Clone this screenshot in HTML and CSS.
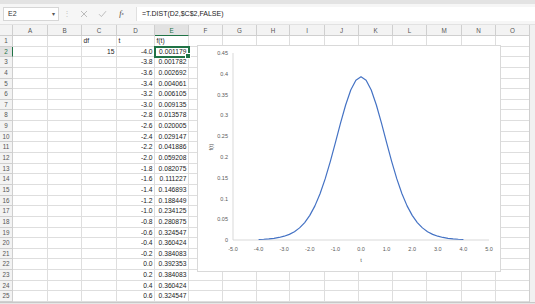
FILE: index.html
```html
<!DOCTYPE html>
<html lang="en">

<head>
  <meta charset="UTF-8">
  <title>T.DIST</title>
  <link rel="stylesheet" href="styles.css">
</head>

<body>
  <div class="app">
    <div class="topStrip"></div>
    <div class="formulaBar">
      <div class="nameBox">E2<span class="caret">&#9662;</span></div>
      <div class="dots">&#8942;</div>
      <div class="fbtn">
        <svg width="8" height="8" viewBox="0 0 8 8"><path d="M1 1L7 7M7 1L1 7" stroke="#b5b5b5" stroke-width="0.9" /></svg>
      </div>
      <div class="fbtn">
        <svg width="9" height="8" viewBox="0 0 9 8"><path d="M1 4.2L3.4 6.6L8 1.2" stroke="#b5b5b5" stroke-width="0.9" fill="none" /></svg>
      </div>
      <div class="fbtn fx"><i>f</i><sub>x</sub></div>
      <div class="formulaInput">=T.DIST(D2,$C$2,FALSE)</div>
    </div>

    <div class="sheet">
      <div class="corner"></div>
      <div class="ch">A</div><div class="ch">B</div><div class="ch">C</div><div class="ch">D</div>
      <div class="ch on">E</div><div class="ch">F</div><div class="ch">G</div><div class="ch">H</div>
      <div class="ch">I</div><div class="ch">J</div><div class="ch">K</div><div class="ch">L</div>
      <div class="ch">M</div><div class="ch">N</div><div class="ch">O</div><div class="edge"></div>

      <div class="rh">1</div><div></div><div></div><div class="l">df</div><div class="l">t</div><div class="l">f(t)</div><div></div><div></div><div></div><div></div><div></div><div></div><div></div><div></div><div></div><div></div><div class="edge"></div>
      <div class="rh on">2</div><div></div><div></div><div class="r">15</div><div class="r">-4.0</div><div class="r sel">0.001179</div><div></div><div></div><div></div><div></div><div></div><div></div><div></div><div></div><div></div><div></div><div class="edge"></div>
      <div class="rh">3</div><div></div><div></div><div></div><div class="r">-3.8</div><div class="r">0.001782</div><div></div><div></div><div></div><div></div><div></div><div></div><div></div><div></div><div></div><div></div><div class="edge"></div>
      <div class="rh">4</div><div></div><div></div><div></div><div class="r">-3.6</div><div class="r">0.002692</div><div></div><div></div><div></div><div></div><div></div><div></div><div></div><div></div><div></div><div></div><div class="edge"></div>
      <div class="rh">5</div><div></div><div></div><div></div><div class="r">-3.4</div><div class="r">0.004061</div><div></div><div></div><div></div><div></div><div></div><div></div><div></div><div></div><div></div><div></div><div class="edge"></div>
      <div class="rh">6</div><div></div><div></div><div></div><div class="r">-3.2</div><div class="r">0.006105</div><div></div><div></div><div></div><div></div><div></div><div></div><div></div><div></div><div></div><div></div><div class="edge"></div>
      <div class="rh">7</div><div></div><div></div><div></div><div class="r">-3.0</div><div class="r">0.009135</div><div></div><div></div><div></div><div></div><div></div><div></div><div></div><div></div><div></div><div></div><div class="edge"></div>
      <div class="rh">8</div><div></div><div></div><div></div><div class="r">-2.8</div><div class="r">0.013578</div><div></div><div></div><div></div><div></div><div></div><div></div><div></div><div></div><div></div><div></div><div class="edge"></div>
      <div class="rh">9</div><div></div><div></div><div></div><div class="r">-2.6</div><div class="r">0.020005</div><div></div><div></div><div></div><div></div><div></div><div></div><div></div><div></div><div></div><div></div><div class="edge"></div>
      <div class="rh">10</div><div></div><div></div><div></div><div class="r">-2.4</div><div class="r">0.029147</div><div></div><div></div><div></div><div></div><div></div><div></div><div></div><div></div><div></div><div></div><div class="edge"></div>
      <div class="rh">11</div><div></div><div></div><div></div><div class="r">-2.2</div><div class="r">0.041886</div><div></div><div></div><div></div><div></div><div></div><div></div><div></div><div></div><div></div><div></div><div class="edge"></div>
      <div class="rh">12</div><div></div><div></div><div></div><div class="r">-2.0</div><div class="r">0.059208</div><div></div><div></div><div></div><div></div><div></div><div></div><div></div><div></div><div></div><div></div><div class="edge"></div>
      <div class="rh">13</div><div></div><div></div><div></div><div class="r">-1.8</div><div class="r">0.082075</div><div></div><div></div><div></div><div></div><div></div><div></div><div></div><div></div><div></div><div></div><div class="edge"></div>
      <div class="rh">14</div><div></div><div></div><div></div><div class="r">-1.6</div><div class="r">0.111227</div><div></div><div></div><div></div><div></div><div></div><div></div><div></div><div></div><div></div><div></div><div class="edge"></div>
      <div class="rh">15</div><div></div><div></div><div></div><div class="r">-1.4</div><div class="r">0.146893</div><div></div><div></div><div></div><div></div><div></div><div></div><div></div><div></div><div></div><div></div><div class="edge"></div>
      <div class="rh">16</div><div></div><div></div><div></div><div class="r">-1.2</div><div class="r">0.188449</div><div></div><div></div><div></div><div></div><div></div><div></div><div></div><div></div><div></div><div></div><div class="edge"></div>
      <div class="rh">17</div><div></div><div></div><div></div><div class="r">-1.0</div><div class="r">0.234125</div><div></div><div></div><div></div><div></div><div></div><div></div><div></div><div></div><div></div><div></div><div class="edge"></div>
      <div class="rh">18</div><div></div><div></div><div></div><div class="r">-0.8</div><div class="r">0.280875</div><div></div><div></div><div></div><div></div><div></div><div></div><div></div><div></div><div></div><div></div><div class="edge"></div>
      <div class="rh">19</div><div></div><div></div><div></div><div class="r">-0.6</div><div class="r">0.324547</div><div></div><div></div><div></div><div></div><div></div><div></div><div></div><div></div><div></div><div></div><div class="edge"></div>
      <div class="rh">20</div><div></div><div></div><div></div><div class="r">-0.4</div><div class="r">0.360424</div><div></div><div></div><div></div><div></div><div></div><div></div><div></div><div></div><div></div><div></div><div class="edge"></div>
      <div class="rh">21</div><div></div><div></div><div></div><div class="r">-0.2</div><div class="r">0.384083</div><div></div><div></div><div></div><div></div><div></div><div></div><div></div><div></div><div></div><div></div><div class="edge"></div>
      <div class="rh">22</div><div></div><div></div><div></div><div class="r">0.0</div><div class="r">0.392353</div><div></div><div></div><div></div><div></div><div></div><div></div><div></div><div></div><div></div><div></div><div class="edge"></div>
      <div class="rh">23</div><div></div><div></div><div></div><div class="r">0.2</div><div class="r">0.384083</div><div></div><div></div><div></div><div></div><div></div><div></div><div></div><div></div><div></div><div></div><div class="edge"></div>
      <div class="rh">24</div><div></div><div></div><div></div><div class="r">0.4</div><div class="r">0.360424</div><div></div><div></div><div></div><div></div><div></div><div></div><div></div><div></div><div></div><div></div><div class="edge"></div>
      <div class="rh">25</div><div></div><div></div><div></div><div class="r">0.6</div><div class="r">0.324547</div><div></div><div></div><div></div><div></div><div></div><div></div><div></div><div></div><div></div><div></div><div class="edge"></div>
    </div>
    <div class="tabBar"></div>

    <!-- chart floats over the sheet, coords in page px -->
    <div class="chart">
      <svg width="304" height="227" viewBox="197 45 304 227">
        <g class="axis">
          <line x1="233" y1="53" x2="233" y2="240" />
          <line x1="233" y1="240" x2="489" y2="240" />
        </g>
        <g class="ylab">
          <text x="228" y="55">0.45</text>
          <text x="228" y="76">0.4</text>
          <text x="228" y="97">0.35</text>
          <text x="228" y="117">0.3</text>
          <text x="228" y="138">0.25</text>
          <text x="228" y="159">0.2</text>
          <text x="228" y="180">0.15</text>
          <text x="228" y="201">0.1</text>
          <text x="228" y="221">0.05</text>
          <text x="228" y="242">0</text>
        </g>
        <g class="xlab">
          <text x="233" y="251">-5.0</text>
          <text x="258.6" y="251">-4.0</text>
          <text x="284.2" y="251">-3.0</text>
          <text x="309.8" y="251">-2.0</text>
          <text x="335.4" y="251">-1.0</text>
          <text x="361" y="251">0.0</text>
          <text x="386.6" y="251">1.0</text>
          <text x="412.2" y="251">2.0</text>
          <text x="437.8" y="251">3.0</text>
          <text x="463.4" y="251">4.0</text>
          <text x="489" y="251">5.0</text>
        </g>
        <text class="atitle" x="361" y="261.5">t</text>
        <text class="atitle" transform="translate(213 147) rotate(-90)">f(t)</text>
        <polyline class="curve" points="258.6,239.51 263.72,239.26 268.84,238.88 273.96,238.31 279.08,237.46 284.2,236.2 289.32,234.35 294.44,231.68 299.56,227.88 304.68,222.58 309.8,215.37 314.92,205.86 320.04,193.73 325.16,178.89 330.28,161.6 335.4,142.6 340.52,123.16 345.64,104.99 350.76,90.06 355.88,80.22 361,76.78 366.12,80.22 371.24,90.06 376.36,104.99 381.48,123.16 386.6,142.6 391.72,161.6 396.84,178.89 401.96,193.73 407.08,205.86 412.2,215.37 417.32,222.58 422.44,227.88 427.56,231.68 432.68,234.35 437.8,236.2 442.92,237.46 448.04,238.31 453.16,238.88 458.28,239.26 463.4,239.51" />
      </svg>
    </div>
  </div>
</body>

</html>
```

FILE: styles.css
```css
* {
  margin: 0;
  padding: 0;
  box-sizing: border-box;
}

body {
  font-family: "Liberation Sans", Arial, sans-serif;
  background: #fff;
  overflow: hidden;
}

.app {
  position: relative;
  width: 535px;
  height: 304px;
  overflow: hidden;
}

.topStrip {
  height: 4px;
  background: #e3e3e3;
}

.formulaBar {
  height: 21px;
  display: flex;
  align-items: center;
  padding: 0 0 1px 3px;
  background: #f6f6f6;
  border-bottom: 1px solid #e2e2e2;
}

.nameBox {
  width: 56px;
  height: 14px;
  background: #fff;
  border: 1px solid #d6d6d6;
  font-size: 7px;
  line-height: 12px;
  padding-left: 4px;
  color: #333;
  display: flex;
  justify-content: space-between;
}

.caret {
  font-size: 6px;
  color: #555;
  padding-right: 3px;
}

.dots {
  width: 14px;
  margin-left: 1px;
  text-align: center;
  font-size: 8px;
  color: #c4c4c4;
}

.fbtn {
  width: 19px;
  height: 14px;
  display: flex;
  align-items: center;
  justify-content: center;
}

.fx {
  font-family: "Liberation Serif", serif;
  font-size: 8px;
  color: #444;
}

.fx sub {
  font-size: 5px;
  font-style: italic;
}

.formulaInput {
  flex: 1;
  height: 14px;
  margin-left: 5px;
  background: #fff;
  border-left: 1px solid #e0e0e0;
  font-size: 7px;
  line-height: 14px;
  padding-left: 5px;
  color: #222;
}

.sheet {
  display: grid;
  grid-template-columns: 13px 35px 34px 35px 38px 34px 34px 34px 33px 35px 34px 34px 34px 35px 34px 34px 5px;
  grid-template-rows: 11px;
  grid-auto-rows: 10.65px;
  font-size: 6.7px;
  color: #1a1a1a;
}

.sheet > div {
  border-right: 1px solid #dedede;
  border-bottom: 1px solid #dedede;
  line-height: 10px;
  white-space: nowrap;
  overflow: hidden;
}

.sheet > .corner,
.sheet > .ch,
.sheet > .rh {
  background: #f3f3f3;
  border-color: #cfcfcf;
  color: #555;
  font-size: 6.3px;
  text-align: center;
}

.sheet > .ch {
  line-height: 11px;
}

.sheet > .ch.on {
  background: #e2e2e2;
  border-bottom: 1px solid #217346;
  color: #217346;
}

.sheet > .rh.on {
  background: #e2e2e2;
  border-right: 1px solid #217346;
  color: #217346;
}

.sheet > .edge {
  background: #f1f1f1;
  border-right: none;
  border-bottom: none;
  border-left: 1px solid #cfcfcf;
  margin-left: -1px;
}

.l {
  padding-left: 1.5px;
}

.r {
  text-align: right;
  padding-right: 1.5px;
}

.sheet > .sel {
  position: relative;
  overflow: visible;
  outline: 2px solid #217346;
  outline-offset: -1px;
}

.sel::after {
  content: "";
  position: absolute;
  right: -3px;
  bottom: -3px;
  width: 4px;
  height: 4px;
  background: #217346;
  border: 1px solid #fff;
}

.tabBar {
  height: 4px;
  background: #e6e6e6;
  border-top: 1px solid #c8c8c8;
}

.chart {
  position: absolute;
  left: 197px;
  top: 45px;
  width: 304px;
  height: 227px;
  background: #fff;
  border: 1px solid #d9d9d9;
  z-index: 10;
}

.chart svg {
  position: absolute;
  left: -1px;
  top: -1px;
  font-family: "Liberation Sans", Arial, sans-serif;
}

.axis line {
  stroke: #d9d9d9;
  stroke-width: 1;
}

.ylab text {
  font-size: 5.5px;
  fill: #595959;
  text-anchor: end;
}

.xlab text {
  font-size: 5.5px;
  fill: #595959;
  text-anchor: middle;
}

.atitle {
  font-size: 5.8px;
  fill: #595959;
  text-anchor: middle;
}

.curve {
  fill: none;
  stroke: #4472c4;
  stroke-width: 1.2;
  stroke-linejoin: round;
}
```
